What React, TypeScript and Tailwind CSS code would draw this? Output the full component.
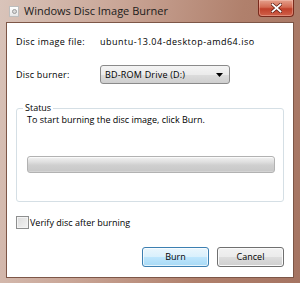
import * as React from "react";

const font = { fontFamily: "'Open Sans', 'Noto Sans', sans-serif" };

function CloseButton() {
    return (
        <button
            type="button"
            aria-label="Close"
            className="mr-[6px] flex h-[17px] w-[36px] items-center justify-center self-start rounded-b-[4px] border border-t-0 border-[#7a2a1c] bg-[linear-gradient(#e5a08c,#d36a52_45%,#c0402a_55%,#d0614a)] shadow-[inset_0_0_0_1px_rgba(255,220,210,0.35)]"
        >
            <svg width="11" height="10" viewBox="0 0 11 10">
                <path d="M1.5 1.5 L9.5 8.5 M9.5 1.5 L1.5 8.5" stroke="#5a1a10" strokeWidth="3.2" strokeLinecap="square" />
                <path d="M1.5 1.5 L9.5 8.5 M9.5 1.5 L1.5 8.5" stroke="#ffffff" strokeWidth="1.8" strokeLinecap="square" />
            </svg>
        </button>
    );
}

function AppIcon() {
    return (
        <div className="ml-[9px] flex h-[11px] w-[10px] items-center justify-center border border-[#bdbdbd] bg-[linear-gradient(#ffffff,#e6e6e6)]">
            <div className="h-[5px] w-[5px] rounded-full border border-[#9a9a9a] bg-[#d8d8d8]" />
        </div>
    );
}

export default function App() {
    return (
        <div
            className="flex h-[283px] w-[300px] flex-col bg-[linear-gradient(100deg,#d9c4ba_0%,#c9a596_35%,#b0806c_70%,#a57462_100%)] text-[9px] text-black"
            style={font}
        >
            {/* title bar */}
            <div className="flex h-[22px] items-center">
                <AppIcon />
                <span className="ml-[5px] text-[11px] text-[#1b1b1b]">Windows Disc Image Burner</span>
                <div className="ml-auto flex self-stretch">
                    <CloseButton />
                </div>
            </div>

            {/* client area */}
            <div className="mx-[6px] flex h-[256px] flex-col border border-[#7d5647] bg-white px-[9px]">
                <div className="mt-[11px] flex h-[16px] items-center">
                    <span className="w-[84px] tracking-[0.4px]">Disc image file:</span>
                    <span className="tracking-[0.5px]">ubuntu-13.04-desktop-amd64.iso</span>
                </div>

                <div className="mt-[15px] flex h-[19px] items-center">
                    <span className="w-[84px] tracking-[0.2px]">Disc burner:</span>
                    <div className="flex h-[19px] w-[130px] items-center justify-between rounded-[3px] border border-[#8a8a8a] bg-[linear-gradient(#f4f4f4,#ebebeb_50%,#dcdcdc_51%,#cfcfcf)] pl-[4px] pr-[6px]">
                        <span className="tracking-[0.2px]">BD-ROM Drive (D:)</span>
                        <svg width="7" height="4" viewBox="0 0 7 4">
                            <path d="M0 0 H7 L3.5 4 Z" fill="#000" />
                        </svg>
                    </div>
                </div>

                <fieldset className="mt-[19px] h-[99px] rounded-[3px] border border-[#d5dfe5] pl-[10px] pr-[8px]">
                    <legend className="ml-[-4px] px-[2px] leading-[10px]">Status</legend>
                    <div className="h-[14px] leading-[14px]">To start burning the disc image, click Burn.</div>
                    <div className="mt-[29px] h-[17px] rounded-[3px] border border-[#b2b2b2] bg-[linear-gradient(#f2f2f2,#e1e1e1_30%,#cfcfcf_55%,#c9c9c9_90%,#d9d9d9)] shadow-[inset_0_1px_0_#fafafa]" />
                </fieldset>

                <div className="mt-[14px] flex items-center">
                    <div className="h-[13px] w-[13px] border border-[#8e8f8f] bg-[linear-gradient(135deg,#dcdcdc,#f4f4f4)] shadow-[inset_0_0_0_1px_#f4f4f4]" />
                    <span className="ml-[1px]">Verify disc after burning</span>
                </div>

                <div className="mt-[17px] flex justify-end gap-[8px]">
                    <button
                        type="button"
                        className="h-[20px] w-[67px] rounded-[3px] border border-[#3c7fb1] bg-[linear-gradient(#eaf6fd,#d9f0fc_50%,#bee6fd_51%,#a7d9f5)] shadow-[inset_0_0_0_1px_#ffffffb0]"
                    >
                        Burn
                    </button>
                    <button
                        type="button"
                        className="h-[20px] w-[67px] rounded-[3px] border border-[#707070] bg-[linear-gradient(#f2f2f2,#ebebeb_50%,#dddddd_51%,#cfcfcf)] shadow-[inset_0_0_0_1px_#fafafa]"
                    >
                        Cancel
                    </button>
                </div>
            </div>
        </div>
    );
}
